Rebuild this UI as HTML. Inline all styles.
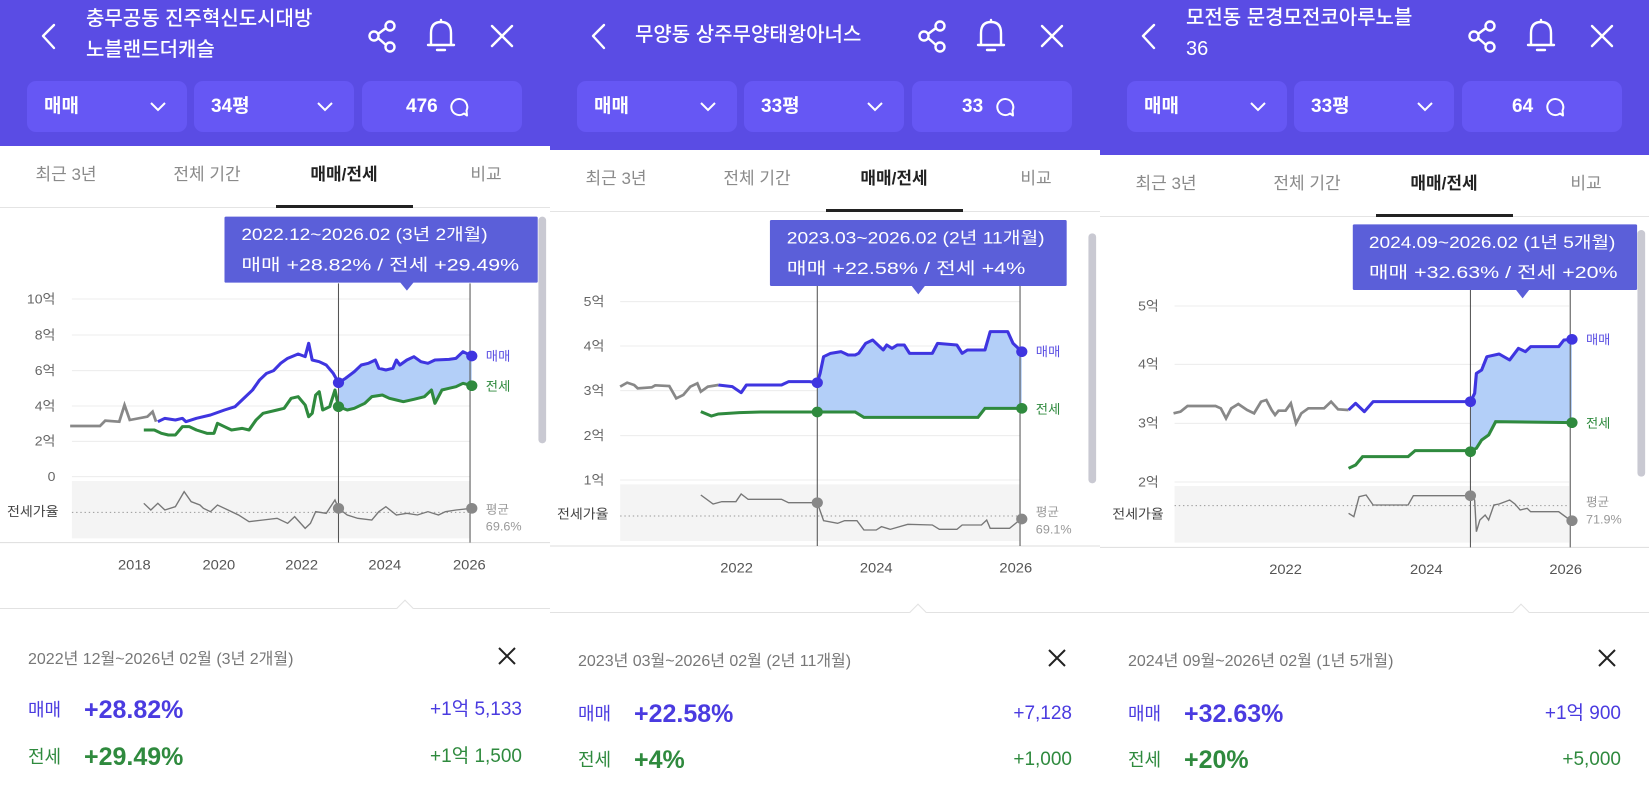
<!DOCTYPE html>
<html><head><meta charset="utf-8"><style>
*{margin:0;padding:0;box-sizing:border-box}
body{width:1649px;height:800px;overflow:hidden;background:#fff;font-family:"Liberation Sans","Noto Sans CJK KR",sans-serif;position:relative}
.p{position:absolute;top:0;width:550px;height:800px;overflow:hidden;background:#fff}
.hd{position:absolute;left:0;top:0;width:100%;background:#5a4ce4}
.title{position:absolute;left:86px;color:#fff;font-size:20px;line-height:31px;font-weight:500}
.box{position:absolute;top:81px;height:51px;background:#6657f4;border-radius:9px;color:#fff;font-weight:bold;font-size:19px;line-height:51px}
.box span{position:absolute;left:17px;top:0}
.box svg{position:absolute}
.tabs{position:absolute;left:0;width:100%;height:40px;border-bottom:1px solid #e4e4e4}
.tab{position:absolute;top:0;transform:translateX(-50%);font-size:17px;color:#8a8a8a;white-space:nowrap}
.tab.on{color:#222;font-weight:bold}
.ul{position:absolute;left:276px;width:137px;height:3px;background:#222}
.sep{position:absolute;left:0;width:100%;height:1px;background:#e2e2e2}
.caret{position:absolute;width:12px;height:12px;background:#fff;border-left:1px solid #e2e2e2;border-top:1px solid #e2e2e2;transform:rotate(45deg)}
.date{position:absolute;left:28px;font-size:16px;color:#777}
.row{position:absolute;left:0;width:100%;height:30px}
.row div{position:absolute;top:0;line-height:30px;height:30px;white-space:nowrap}
.lab{left:28px;font-size:18px}
.pct{left:84px;font-size:25px;font-weight:bold}
.amt{right:28px;font-size:19px}
.bl{color:#4a3be0}.gr{color:#2f8a3e}
</style></head><body>

<!-- PANEL 1 -->
<div class="p" style="left:0">
 <div class="hd" style="height:146px"></div>
 <svg style="position:absolute;left:0;top:0" width="550" height="146">
  <g fill="none" stroke="#fff" stroke-width="2.4" stroke-linecap="round" stroke-linejoin="round">
   <path d="M54 25 L43 36 L54 48"/>
   <circle cx="374" cy="36" r="4.5"/><circle cx="390" cy="26" r="4.5"/><circle cx="390" cy="47" r="4.5"/><path d="M378 34 L386 28 M378 38 L386 45"/>
   <path d="M431 45 L431 33 Q431 22 441 22 Q451 22 451 33 L451 45 Z M428 45 L454 45 M437 50 L445 50 M441 20 L441 22"/>
   <path d="M492 26 L512 46 M512 26 L492 46"/>
  </g>
 </svg>
 <div class="title" style="top:4px">충무공동 진주혁신도시대방<br>노블랜드더캐슬</div>
 <div class="box" style="left:27px;width:160px"><span>매매</span><svg style="left:122px;top:20px" width="18" height="12"><path d="M2 2 L9 9 L16 2" fill="none" stroke="#fff" stroke-width="2"/></svg></div>
 <div class="box" style="left:194px;width:160px"><span>34평</span><svg style="left:122px;top:20px" width="18" height="12"><path d="M2 2 L9 9 L16 2" fill="none" stroke="#fff" stroke-width="2"/></svg></div>
 <div class="box" style="left:362px;width:160px"><span style="left:44px">476</span><svg style="left:86px;top:15px" width="22" height="22"><path d="M16 17.5 A8 8 0 1 1 18.5 14.5 L19 19.5 Z" fill="none" stroke="#fff" stroke-width="2" stroke-linejoin="round"/></svg></div>
 <div class="tabs" style="top:160px;height:48px">
  <div class="tab" style="left:66px">최근 3년</div><div class="tab" style="left:207px">전체 기간</div><div class="tab on" style="left:344px">매매/전세</div><div class="tab" style="left:486px">비교</div>
 </div>
 <div class="ul" style="top:205px"></div>
 <svg style="position:absolute;left:0;top:200px" width="550" height="400" viewBox="0 0 1568 1200" preserveAspectRatio="none" font-family="Liberation Sans, Noto Sans CJK KR, sans-serif">
  <rect x="1535" y="50" width="22" height="680" rx="11" fill="#c9c9d2"/>
  <g stroke="#ececec" stroke-width="3"><path d="M205 297H1340M205 405H1340M205 512H1340M205 618H1340M205 724H1340M205 830H1340"/></g>
  <g fill="#666" font-size="40" text-anchor="end"><text x="158" y="310">10억</text><text x="158" y="418">8억</text><text x="158" y="525">6억</text><text x="158" y="631">4억</text><text x="158" y="737">2억</text><text x="158" y="843">0</text></g>
  <rect x="205" y="843" width="1135" height="172" fill="#f4f4f4"/>
  <path d="M205 937H1340" stroke="#999" stroke-width="3" stroke-dasharray="4 8"/>
  <text x="20" y="948" font-size="40" fill="#444">전세가율</text>
  <path d="M0 1028H1568" stroke="#ddd" stroke-width="3"/>
  <path d="M965 548 L985 535 1010 515 1030 495 1050 490 1070 480 1080 505 1100 510 1120 505 1130 480 1140 495 1160 480 1180 470 1200 485 1220 490 1240 480 1280 478 1300 475 1320 455 1345 468 L1345 557 1320 550 1300 560 1280 565 1260 570 1240 610 1230 570 1210 590 1180 598 1150 605 1130 600 1110 595 1090 585 1060 590 1040 610 1010 625 990 630 965 620Z" fill="#b3cff8"/>
  <path d="M200 678 L285 678 300 662 340 665 355 615 370 660 420 650 435 635 445 665" fill="none" stroke="#888" stroke-width="8"/>
  <path d="M410 690 L440 690 460 700 480 705 500 705 520 680 540 680 560 690 590 700 610 700 620 670 640 680 660 690 690 685 710 690 730 660 750 640 790 630 810 625 830 595 850 590 870 615 880 650 890 640 900 585 910 575 920 630 940 620 955 570 965 620 990 630 1010 625 1040 610 1060 590 1090 585 1110 595 1130 600 1150 605 1180 598 1210 590 1230 570 1240 610 1260 570 1280 565 1300 560 1320 550 1345 557" fill="none" stroke="#2f8a3e" stroke-width="9" stroke-linejoin="round"/>
  <path d="M450 665 L470 655 500 660 520 655 530 665 560 655 600 645 640 630 670 620 700 590 720 570 740 540 760 520 780 512 800 490 820 475 850 462 870 470 880 430 890 480 910 485 930 495 950 520 965 548 985 535 1010 515 1030 495 1050 490 1070 480 1080 505 1100 510 1120 505 1130 480 1140 495 1160 480 1180 470 1200 485 1220 490 1240 480 1280 478 1300 475 1320 455 1345 468" fill="none" stroke="#3f35e0" stroke-width="9" stroke-linejoin="round"/>
  <path d="M410 910 430 930 450 910 470 930 500 920 525 875 545 905 570 915 580 925 600 935 620 915 650 930 680 945 710 965 750 960 790 955 820 970 840 950 870 985 885 970 900 935 930 940 955 900 965 925 990 945 1020 955 1060 960 1080 935 1100 920 1130 945 1160 940 1190 945 1220 935 1250 945 1270 935 1300 930 1345 925" fill="none" stroke="#777" stroke-width="4"/>
  <path d="M965 250V1028M1340 250V1028" stroke="#555" stroke-width="3"/>
  <circle cx="965" cy="548" r="16" fill="#3f35e0"/><circle cx="1345" cy="468" r="16" fill="#3f35e0"/>
  <circle cx="965" cy="620" r="16" fill="#2f8a3e"/><circle cx="1345" cy="557" r="16" fill="#2f8a3e"/>
  <circle cx="965" cy="925" r="16" fill="#888"/><circle cx="1345" cy="925" r="16" fill="#888"/>
  <text x="1385" y="482" font-size="38" fill="#5b4fe3">매매</text><text x="1385" y="572" font-size="38" fill="#2f8a3e">전세</text>
  <text x="1385" y="940" font-size="36" fill="#999">평균</text><text x="1385" y="992" font-size="36" fill="#999">69.6%</text>
  <rect x="640" y="50" width="893" height="198" rx="4" fill="#5b5fd9"/><path d="M1140 246 L1180 246 1160 272Z" fill="#5b5fd9"/>
  <text x="688" y="120" font-size="50" fill="#fff" textLength="702" lengthAdjust="spacingAndGlyphs">2022.12~2026.02 (3년 2개월)</text>
  <text x="688" y="212" font-size="50" fill="#fff" textLength="792" lengthAdjust="spacingAndGlyphs">매매 +28.82%  /  전세 +29.49%</text>
  <g fill="#555" font-size="42" text-anchor="middle"><text x="383" y="1108">2018</text><text x="624" y="1108">2020</text><text x="860" y="1108">2022</text><text x="1097" y="1108">2024</text><text x="1338" y="1108">2026</text></g>
 </svg>
 <div class="sep" style="top:608px"></div><div class="caret" style="left:399px;top:602px"></div>
 <div class="date" style="top:645px">2022년 12월~2026년 02월 (3년 2개월)</div>
 <svg style="position:absolute;left:497px;top:646px" width="20" height="20"><path d="M2 2L18 18M18 2L2 18" stroke="#222" stroke-width="2"/></svg>
 <div class="row" style="top:695px"><div class="lab bl">매매</div><div class="pct bl">+28.82%</div><div class="amt bl">+1억 5,133</div></div>
 <div class="row" style="top:742px"><div class="lab gr">전세</div><div class="pct gr">+29.49%</div><div class="amt gr">+1억 1,500</div></div>
</div>

<!-- PANEL 2 -->
<div class="p" style="left:550px">
 <div class="hd" style="height:150px"></div>
 <svg style="position:absolute;left:0;top:0" width="550" height="146">
  <g fill="none" stroke="#fff" stroke-width="2.4" stroke-linecap="round" stroke-linejoin="round">
   <path d="M54 25 L43 36 L54 48"/>
   <circle cx="374" cy="36" r="4.5"/><circle cx="390" cy="26" r="4.5"/><circle cx="390" cy="47" r="4.5"/><path d="M378 34 L386 28 M378 38 L386 45"/>
   <path d="M431 45 L431 33 Q431 22 441 22 Q451 22 451 33 L451 45 Z M428 45 L454 45 M437 50 L445 50 M441 20 L441 22"/>
   <path d="M492 26 L512 46 M512 26 L492 46"/>
  </g>
 </svg>
 <div class="title" style="top:20px;left:85px">무양동 상주무양태왕아너스</div>
 <div class="box" style="left:27px;width:160px"><span>매매</span><svg style="left:122px;top:20px" width="18" height="12"><path d="M2 2 L9 9 L16 2" fill="none" stroke="#fff" stroke-width="2"/></svg></div>
 <div class="box" style="left:194px;width:160px"><span>33평</span><svg style="left:122px;top:20px" width="18" height="12"><path d="M2 2 L9 9 L16 2" fill="none" stroke="#fff" stroke-width="2"/></svg></div>
 <div class="box" style="left:362px;width:160px"><span style="left:50px">33</span><svg style="left:82px;top:15px" width="22" height="22"><path d="M16 17.5 A8 8 0 1 1 18.5 14.5 L19 19.5 Z" fill="none" stroke="#fff" stroke-width="2" stroke-linejoin="round"/></svg></div>
 <div class="tabs" style="top:164px;height:48px">
  <div class="tab" style="left:66px">최근 3년</div><div class="tab" style="left:207px">전체 기간</div><div class="tab on" style="left:344px">매매/전세</div><div class="tab" style="left:486px">비교</div>
 </div>
 <div class="ul" style="top:209px"></div>
 <svg style="position:absolute;left:0;top:200px" width="550" height="400" viewBox="0 0 1568 1200" preserveAspectRatio="none" font-family="Liberation Sans, Noto Sans CJK KR, sans-serif">
  <rect x="1535" y="100" width="22" height="750" rx="11" fill="#c9c9d2"/>
  <g stroke="#ececec" stroke-width="3"><path d="M200 305H1340M200 438H1340M200 572H1340M200 707H1340M200 840H1340"/></g>
  <g fill="#666" font-size="40" text-anchor="end"><text x="155" y="318">5억</text><text x="155" y="451">4억</text><text x="155" y="585">3억</text><text x="155" y="720">2억</text><text x="155" y="853">1억</text></g>
  <rect x="200" y="853" width="1140" height="170" fill="#f4f4f4"/>
  <path d="M200 948H1340" stroke="#999" stroke-width="3" stroke-dasharray="4 8"/>
  <text x="20" y="955" font-size="40" fill="#444">전세가율</text>
  <path d="M0 1038H1568" stroke="#ddd" stroke-width="3"/>
  <path d="M762 548 L770 520 780 470 800 460 830 455 850 465 870 465 880 460 900 430 920 420 940 440 950 450 960 435 975 445 990 435 1010 435 1025 460 1090 460 1105 430 1160 435 1175 460 1190 450 1240 450 1255 395 1305 395 1320 430 1345 455 L1345 625 1240 625 1220 652 895 652 870 636 762 636Z" fill="#b3cff8"/>
  <path d="M200 560 L220 548 240 555 250 565 290 562 300 556 340 558 360 595 380 585 400 560 420 550 430 575 450 560 480 555" fill="none" stroke="#888" stroke-width="8"/>
  <path d="M430 635 L460 648 480 642 540 638 600 636 760 636 870 636 895 652 1220 652 1240 625 1345 625" fill="none" stroke="#2f8a3e" stroke-width="9"/>
  <path d="M480 555 L520 560 545 578 560 555 660 555 680 545 740 545 762 548 770 520 780 470 800 460 830 455 850 465 870 465 880 460 900 430 920 420 940 440 950 450 960 435 975 445 990 435 1010 435 1025 460 1090 460 1105 430 1160 435 1175 460 1190 450 1240 450 1255 395 1305 395 1320 430 1345 455" fill="none" stroke="#3f35e0" stroke-width="9" stroke-linejoin="round"/>
  <path d="M430 885 465 912 490 905 530 905 545 882 565 898 660 898 680 908 762 908 780 962 820 970 840 962 875 962 895 990 930 990 945 980 970 988 1020 973 1090 975 1110 988 1160 988 1175 975 1230 975 1245 960 1255 985 1310 985 1345 955" fill="none" stroke="#777" stroke-width="4"/>
  <path d="M762 258V1038M1340 258V1038" stroke="#555" stroke-width="3"/>
  <circle cx="762" cy="548" r="16" fill="#3f35e0"/><circle cx="1345" cy="455" r="16" fill="#3f35e0"/>
  <circle cx="762" cy="636" r="16" fill="#2f8a3e"/><circle cx="1345" cy="625" r="16" fill="#2f8a3e"/>
  <circle cx="762" cy="908" r="16" fill="#888"/><circle cx="1345" cy="957" r="16" fill="#888"/>
  <text x="1385" y="468" font-size="38" fill="#5b4fe3">매매</text><text x="1385" y="640" font-size="38" fill="#2f8a3e">전세</text>
  <text x="1385" y="948" font-size="36" fill="#999">평균</text><text x="1385" y="1000" font-size="36" fill="#999">69.1%</text>
  <rect x="627" y="60" width="846" height="198" rx="4" fill="#5b5fd9"/><path d="M1030 256 L1070 256 1050 283Z" fill="#5b5fd9"/>
  <text x="675" y="130" font-size="50" fill="#fff" textLength="735" lengthAdjust="spacingAndGlyphs">2023.03~2026.02 (2년 11개월)</text>
  <text x="675" y="222" font-size="50" fill="#fff" textLength="680" lengthAdjust="spacingAndGlyphs">매매 +22.58%  /  전세 +4%</text>
  <g fill="#555" font-size="42" text-anchor="middle"><text x="532" y="1118">2022</text><text x="930" y="1118">2024</text><text x="1328" y="1118">2026</text></g>
 </svg>
 <div class="sep" style="top:612px"></div><div class="caret" style="left:362px;top:606px"></div>
 <div class="date" style="top:647px">2023년 03월~2026년 02월 (2년 11개월)</div>
 <svg style="position:absolute;left:497px;top:648px" width="20" height="20"><path d="M2 2L18 18M18 2L2 18" stroke="#222" stroke-width="2"/></svg>
 <div class="row" style="top:699px"><div class="lab bl">매매</div><div class="pct bl">+22.58%</div><div class="amt bl">+7,128</div></div>
 <div class="row" style="top:745px"><div class="lab gr">전세</div><div class="pct gr">+4%</div><div class="amt gr">+1,000</div></div>
</div>

<!-- PANEL 3 -->
<div class="p" style="left:1100px;width:549px">
 <div class="hd" style="height:155px"></div>
 <svg style="position:absolute;left:0;top:0" width="550" height="146">
  <g fill="none" stroke="#fff" stroke-width="2.4" stroke-linecap="round" stroke-linejoin="round">
   <path d="M54 25 L43 36 L54 48"/>
   <circle cx="374" cy="36" r="4.5"/><circle cx="390" cy="26" r="4.5"/><circle cx="390" cy="47" r="4.5"/><path d="M378 34 L386 28 M378 38 L386 45"/>
   <path d="M431 45 L431 33 Q431 22 441 22 Q451 22 451 33 L451 45 Z M428 45 L454 45 M437 50 L445 50 M441 20 L441 22"/>
   <path d="M492 26 L512 46 M512 26 L492 46"/>
  </g>
 </svg>
 <div class="title" style="top:3px;left:86px">모전동 문경모전코아루노블<br>36</div>
 <div class="box" style="left:27px;width:160px"><span>매매</span><svg style="left:122px;top:20px" width="18" height="12"><path d="M2 2 L9 9 L16 2" fill="none" stroke="#fff" stroke-width="2"/></svg></div>
 <div class="box" style="left:194px;width:160px"><span>33평</span><svg style="left:122px;top:20px" width="18" height="12"><path d="M2 2 L9 9 L16 2" fill="none" stroke="#fff" stroke-width="2"/></svg></div>
 <div class="box" style="left:362px;width:160px"><span style="left:50px">64</span><svg style="left:82px;top:15px" width="22" height="22"><path d="M16 17.5 A8 8 0 1 1 18.5 14.5 L19 19.5 Z" fill="none" stroke="#fff" stroke-width="2" stroke-linejoin="round"/></svg></div>
 <div class="tabs" style="top:169px;height:48px">
  <div class="tab" style="left:66px">최근 3년</div><div class="tab" style="left:207px">전체 기간</div><div class="tab on" style="left:344px">매매/전세</div><div class="tab" style="left:486px">비교</div>
 </div>
 <div class="ul" style="top:214px"></div>
 <svg style="position:absolute;left:0;top:200px" width="549" height="400" viewBox="0 0 1568 1200" preserveAspectRatio="none" font-family="Liberation Sans, Noto Sans CJK KR, sans-serif">
  <rect x="1535" y="90" width="22" height="740" rx="11" fill="#c9c9d2"/>
  <g stroke="#ececec" stroke-width="3"><path d="M213 318H1340M213 493H1340M213 670H1340M213 846H1340"/></g>
  <g fill="#666" font-size="40" text-anchor="end"><text x="168" y="331">5억</text><text x="168" y="506">4억</text><text x="168" y="683">3억</text><text x="168" y="859">2억</text></g>
  <rect x="213" y="858" width="1127" height="170" fill="#f4f4f4"/>
  <path d="M213 917H1340" stroke="#999" stroke-width="3" stroke-dasharray="4 8"/>
  <text x="35" y="955" font-size="40" fill="#444">전세가율</text>
  <path d="M0 1042H1568" stroke="#ddd" stroke-width="3"/>
  <path d="M1058 605 L1070 580 1075 520 1090 510 1105 470 1140 462 1170 480 1195 445 1215 455 1230 440 1310 440 1325 420 1348 418 L1348 668 1130 665 1110 705 1090 720 1075 745 1058 752Z" fill="#b3cff8"/>
  <path d="M210 640 L230 635 250 618 330 618 345 625 360 655 375 625 395 612 420 630 440 640 460 605 475 600 490 630 500 645 510 632 530 632 545 610 560 670 575 640 595 625 640 625 660 605 680 628 710 630" fill="none" stroke="#888" stroke-width="8"/>
  <path d="M710 805 L730 795 750 770 880 770 900 752 1058 752 1075 745 1090 720 1110 705 1130 665 1348 668" fill="none" stroke="#2f8a3e" stroke-width="9"/>
  <path d="M710 630 L730 610 755 635 780 605 1058 605 1070 580 1075 520 1090 510 1105 470 1140 462 1170 480 1195 445 1215 455 1230 440 1310 440 1325 420 1348 418" fill="none" stroke="#3f35e0" stroke-width="9" stroke-linejoin="round"/>
  <path d="M710 940 725 950 740 890 760 885 780 915 880 915 895 887 1058 887 1070 900 1075 995 1085 960 1100 945 1110 960 1125 915 1140 912 1170 900 1185 912 1200 930 1220 925 1230 935 1310 935 1345 962" fill="none" stroke="#777" stroke-width="4"/>
  <path d="M1058 270V1042M1343 270V1042" stroke="#555" stroke-width="3"/>
  <circle cx="1058" cy="605" r="16" fill="#3f35e0"/><circle cx="1348" cy="418" r="16" fill="#3f35e0"/>
  <circle cx="1058" cy="755" r="16" fill="#2f8a3e"/><circle cx="1348" cy="668" r="16" fill="#2f8a3e"/>
  <circle cx="1058" cy="887" r="16" fill="#888"/><circle cx="1348" cy="962" r="16" fill="#888"/>
  <text x="1388" y="432" font-size="38" fill="#5b4fe3">매매</text><text x="1388" y="682" font-size="38" fill="#2f8a3e">전세</text>
  <text x="1388" y="918" font-size="36" fill="#999">평균</text><text x="1388" y="970" font-size="36" fill="#999">71.9%</text>
  <rect x="722" y="73" width="812" height="197" rx="4" fill="#5b5fd9"/><path d="M1187 268 L1227 268 1207 295Z" fill="#5b5fd9"/>
  <text x="768" y="144" font-size="50" fill="#fff" textLength="704" lengthAdjust="spacingAndGlyphs">2024.09~2026.02 (1년 5개월)</text>
  <text x="768" y="234" font-size="50" fill="#fff" textLength="710" lengthAdjust="spacingAndGlyphs">매매 +32.63%  /  전세 +20%</text>
  <g fill="#555" font-size="42" text-anchor="middle"><text x="530" y="1122">2022</text><text x="932" y="1122">2024</text><text x="1330" y="1122">2026</text></g>
 </svg>
 <div class="sep" style="top:612px"></div><div class="caret" style="left:415px;top:606px"></div>
 <div class="date" style="top:647px">2024년 09월~2026년 02월 (1년 5개월)</div>
 <svg style="position:absolute;left:497px;top:648px" width="20" height="20"><path d="M2 2L18 18M18 2L2 18" stroke="#222" stroke-width="2"/></svg>
 <div class="row" style="top:699px"><div class="lab bl">매매</div><div class="pct bl">+32.63%</div><div class="amt bl">+1억 900</div></div>
 <div class="row" style="top:745px"><div class="lab gr">전세</div><div class="pct gr">+20%</div><div class="amt gr">+5,000</div></div>
</div>
</body></html>
